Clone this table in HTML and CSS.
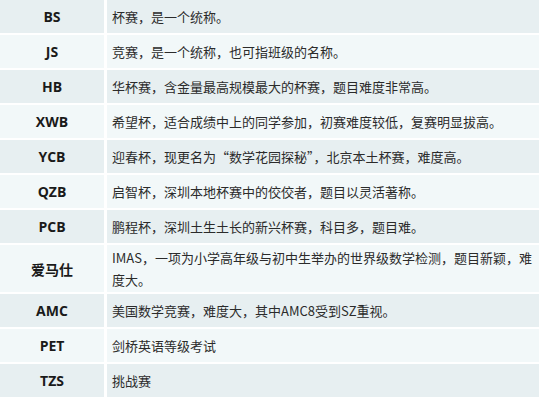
FILE: index.html
```html
<!DOCTYPE html>
<html lang="zh">
<head>
<meta charset="utf-8">
<link rel="stylesheet" href="styles.css">
</head>
<body>
<div class="table">
  <div class="row dark"><div class="abbr">BS</div><div class="desc">杯赛，是一个统称。</div></div>
  <div class="row light"><div class="abbr">JS</div><div class="desc">竞赛，是一个统称，也可指班级的名称。</div></div>
  <div class="row dark"><div class="abbr">HB</div><div class="desc">华杯赛，含金量最高规模最大的杯赛，题目难度非常高。</div></div>
  <div class="row light"><div class="abbr">XWB</div><div class="desc">希望杯，适合成绩中上的同学参加，初赛难度较低，复赛明显拔高。</div></div>
  <div class="row dark"><div class="abbr">YCB</div><div class="desc">迎春杯，现更名为“数学花园探秘”，北京本土杯赛，难度高。</div></div>
  <div class="row light"><div class="abbr">QZB</div><div class="desc">启智杯，深圳本地杯赛中的佼佼者，题目以灵活著称。</div></div>
  <div class="row dark"><div class="abbr">PCB</div><div class="desc">鹏程杯，深圳土生土长的新兴杯赛，科目多，题目难。</div></div>
  <div class="row light tall"><div class="abbr">爱马仕</div><div class="desc">IMAS，一项为小学高年级与初中生举办的世界级数学检测，题目新颖，难度大。</div></div>
  <div class="row dark"><div class="abbr">AMC</div><div class="desc">美国数学竞赛，难度大，其中AMC8受到SZ重视。</div></div>
  <div class="row light"><div class="abbr">PET</div><div class="desc">剑桥英语等级考试</div></div>
  <div class="row dark"><div class="abbr">TZS</div><div class="desc">挑战赛</div></div>
</div>
</body>
</html>
```
FILE: styles.css
```css
html, body {
  margin: 0;
  padding: 0;
  background: #ffffff;
}
body {
  font-family: "Open Sans", "Noto Sans CJK SC", sans-serif;
  color: #2b2b2b;
}
.table {
  display: flex;
  flex-direction: column;
  gap: 2px;
  width: 539px;
}
.row {
  display: grid;
  grid-template-columns: 104px 432px;
  column-gap: 3px;
  height: 33px;
}
.row.tall {
  height: 47px;
}
.row.dark > div {
  background: #e7eff1;
}
.row.light > div {
  background: #f2f8f9;
}
.abbr {
  display: flex;
  align-items: center;
  justify-content: center;
  font-weight: 700;
  font-size: 14px;
  color: #1a1a1a;
  font-family: "Open Sans", "Noto Sans CJK SC", sans-serif;
}
.desc {
  display: flex;
  align-items: center;
  padding: 0 5px 0 5px;
  font-size: 13px;
  line-height: 22px;
  font-family: "Noto Sans CJK SC", sans-serif;
  color: #2b2b2b;
}
```
